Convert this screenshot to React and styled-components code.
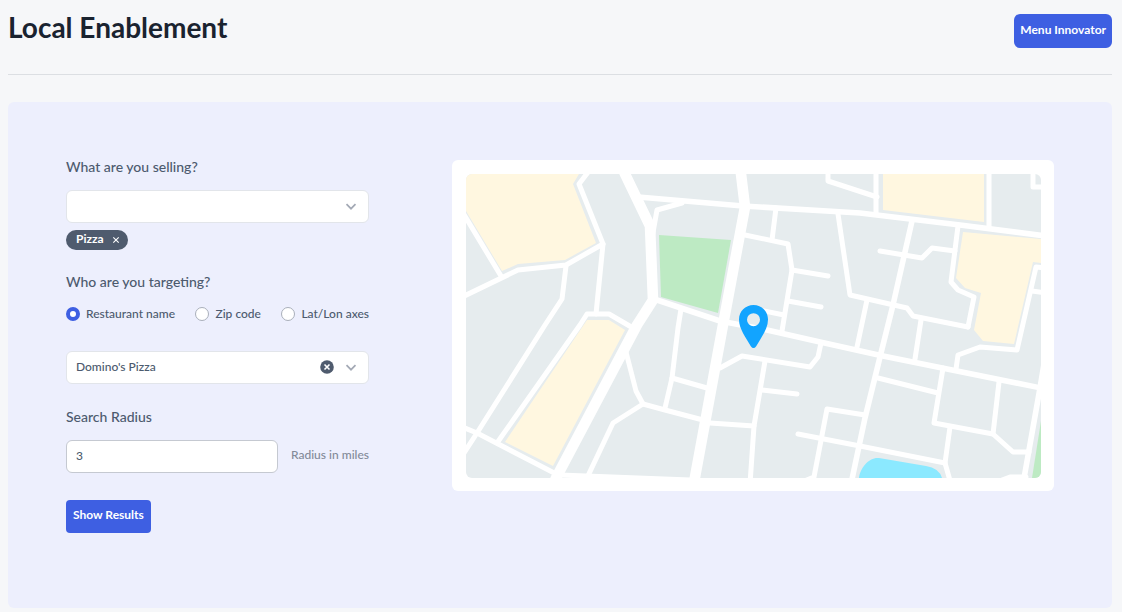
import React, { useState } from "react";
import styled, { createGlobalStyle } from "styled-components";

const GlobalStyle = createGlobalStyle`
  *, *::before, *::after { box-sizing: border-box; }
  body {
    margin: 0;
    background: #f6f7f9;
    color: #4c5a6e;
    font-family: Lato, "Liberation Sans", sans-serif;
    font-size: 12px;
  }
  button, input, select { font: inherit; color: inherit; }
`;

const Page = styled.div`
  padding: 14px 10px 4px 8px;
`;

const Header = styled.header`
  display: flex;
  justify-content: space-between;
  align-items: flex-start;
  padding-bottom: 26px;
  margin-bottom: 27px;
  border-bottom: 1px solid #dcdfe3;
`;

const Title = styled.h1`
  margin: 0;
  font-size: 28px;
  line-height: 26px;
  font-weight: 700;
  color: #1a2330;
`;

const Button = styled.button`
  height: ${(p) => (p.$tall ? 34 : 33)}px;
  padding: ${(p) => (p.$tall ? "0 6px 4px" : "0 7px 4px")};
  border: 0;
  border-radius: ${(p) => (p.$tall ? 6 : 4)}px;
  background: #3e5fe2;
  color: #fff;
  font-size: 12px;
  font-weight: 700;
  white-space: nowrap;
  cursor: pointer;
`;

const Panel = styled.main`
  display: grid;
  grid-template-columns: 303px minmax(0, 1fr);
  gap: 83px;
  align-items: start;
  padding: 58px 58px 75px;
  border-radius: 6px;
  background: #edeffd;
`;

const Form = styled.form`
  display: flex;
  flex-direction: column;
  align-items: stretch;
`;

const Field = styled.div`
  display: flex;
  flex-direction: column;
  gap: 16px;
  margin-bottom: ${(p) => p.$after}px;
`;

const RadioField = styled.fieldset`
  margin: 0 0 28px;
  padding: 0;
  border: 0;
  min-width: 0;
`;

const Label = styled.label`
  font-size: 14px;
  line-height: 14px;
  font-weight: 500;
`;

const Legend = styled.legend`
  padding: 0;
  margin-bottom: 16px;
  font-size: 14px;
  line-height: 14px;
  font-weight: 500;
`;

const SelectBox = styled.div`
  position: relative;
  display: flex;
`;

const Select = styled.select`
  appearance: none;
  width: 100%;
  height: 33px;
  padding: 0 60px 3px 9px;
  border: 1px solid #e2e5ea;
  border-radius: 6px;
  background: #fff;
  font-size: 12px;
  font-weight: 500;
`;

const Chevron = styled.svg`
  position: absolute;
  right: 12px;
  top: 13px;
  pointer-events: none;
`;

const ClearButton = styled.button`
  position: absolute;
  right: 35px;
  top: 9px;
  display: flex;
  padding: 0;
  border: 0;
  background: none;
  cursor: pointer;
`;

const Tags = styled.div`
  display: flex;
  height: 20px;
  margin: 7px 0 25px;
`;

const Tag = styled.span`
  display: flex;
  align-items: center;
  gap: 8px;
  padding: 0 8px 0 10px;
  border-radius: 10px;
  background: #4f5b6e;
  color: #fff;
  font-size: 12px;
  font-weight: 700;
`;

const TagText = styled.span`
  padding-bottom: 4px;
`;

const TagRemove = styled.button`
  display: flex;
  padding: 0;
  border: 0;
  background: none;
  cursor: pointer;
`;

const RadioRow = styled.div`
  display: flex;
  justify-content: space-between;
  height: 18px;
`;

const RadioLabel = styled.label`
  display: flex;
  align-items: center;
  gap: 6px;
  font-size: 12px;
  font-weight: 500;
  white-space: nowrap;
`;

const RadioText = styled.span`
  padding-bottom: 2px;
`;

const Radio = styled.input`
  appearance: none;
  width: 14px;
  height: 14px;
  margin: 0;
  border: 1px solid #a9afba;
  border-radius: 50%;
  background: #fff;
  &:checked { border: 4px solid #3e5fe2; }
`;

const RadiusRow = styled.div`
  display: flex;
  align-items: center;
  justify-content: space-between;
`;

const TextInput = styled.input`
  width: 212px;
  height: 33px;
  padding: 0 9px 2px;
  border: 1px solid #c5c9d1;
  border-radius: 6px;
  background: #fff;
  font-size: 12px;
  font-weight: 500;
`;

const Hint = styled.span`
  padding-bottom: 4px;
  color: #828a98;
  font-size: 12px;
  font-weight: 500;
`;

const Actions = styled.div`
  display: flex;
`;

const MapCard = styled.section`
  padding: 14px 13px 13px 14px;
  border-radius: 6px;
  background: #fff;
`;

const MapDrawing = styled.svg`
  display: block;
  width: 100%;
  height: auto;
  border-radius: 6px;
  background: #e6ecee;
`;

const avenues = [
  "M620 162L625 174L650 226L653 300L637 325L556 478L552 488",
  "M740 164L741 174L745 207L723 325L693 488",
];

const mainStreets = [
  "M638 197L650 198L743 206L860 213L960 225L1046 236",
  "M654 299L720 321L767 330L820 342L883 356L1046 389",
  "M1046 352L1040 388L1023 484",
  "M912 221L893 305L880 357L865 418L851 484",
];

const streets = [
  "M592 167L579 184L603 244L596 314",
  "M603 244L566 265L518 270L460 298",
  "M460 208L501 276",
  "M566 266L562 299L545 325L477 433L460 459",
  "M460 426L477 433L560 476",
  "M497 443L580 325L587 314L609 314L633 328",
  "M626 352L636 391L643 404L613 423L586 480",
  "M643 404L665 410L703 420",
  "M560 475L690 480",
  "M682 203L657 210L652 238",
  "M681 309L678 328L672 378L665 408",
  "M672 378L707 388",
  "M745 235L788 244L792 270L782 331",
  "M776 208L772 240",
  "M792 270L828 276",
  "M788 301L821 307",
  "M755 309L784 315",
  "M828 168L828 181L877 197",
  "M838 214L850 295L907 308L913 316L968 327",
  "M720 368L742 356L810 367L818 357L821 343",
  "M765 361L754 426L750 484",
  "M762 390L797 394",
  "M710 423L754 426",
  "M798 434L860 446L945 463",
  "M865 415L827 409L814 477L802 482",
  "M876 168V214",
  "M989 168V227",
  "M1033 168V187H1046",
  "M880 251L922 258L932 248L955 251",
  "M958 226L951 282L958 290L974 297L968 327",
  "M1046 268L1036 267L1017 350L980 347L958 355L956 369",
  "M1032 291L1046 293",
  "M867 300L857 347",
  "M921 320L915 359",
  "M878 378L938 393",
  "M943 368L934 423L993 434L1013 452H1029",
  "M999 382L993 434",
  "M950 427L945 463L951 484",
  "M1002 480L1010 477H1026",
];

const blocks = [
  { fill: "#fff7e0", d: "M466 174H579L573 184L596 243L565 260L518 264L502 271L466 211Z" },
  { fill: "#fff7e0", d: "M587 320H609L625 330L553 466L505 442Z" },
  { fill: "#fff7e0", d: "M883 174H984V222L883 210Z" },
  { fill: "#fff7e0", d: "M963 232L1041 239V263L1033 262L1014 344L983 341L974 330L981 293L965 288L956 278Z" },
  { fill: "#bdeac3", d: "M659 235L731 240L718 313L661 297Z" },
  { fill: "#bdeac3", d: "M1041 421V478H1032Z" },
  { fill: "#8be9ff", d: "M859 478C860 468 869 457 879 458L926 466Q939 468 942 478Z" },
];

function StreetMap() {
  return (
    <MapDrawing viewBox="466 174 575 304" role="img" aria-label="Map">
      {blocks.map((b) => (
        <path key={b.d} fill={b.fill} d={b.d} />
      ))}
      <g fill="none" stroke="#fff" strokeLinecap="round" strokeLinejoin="round">
        {streets.map((d) => (
          <path key={d} d={d} strokeWidth="5" />
        ))}
        {mainStreets.map((d) => (
          <path key={d} d={d} strokeWidth="5.6" />
        ))}
        {avenues.map((d) => (
          <path key={d} d={d} strokeWidth="10.6" />
        ))}
      </g>
      <path
        fill="#12a4ff"
        fillRule="evenodd"
        d="M753.500 305C745.300 305 739 311.400 739 319.500C739 329 746 337.500 750.800 346.200Q753.500 350 756.200 346.200C761 337.500 768 329 768 319.500C768 311.400 761.700 305 753.500 305ZM753.500 313.200A6.500 6.500 0 1 1 753.500 326.200A6.500 6.500 0 1 1 753.500 313.200Z"
      />
    </MapDrawing>
  );
}

function ChevronIcon() {
  return (
    <Chevron width="12" height="8" viewBox="0 0 12 8" aria-hidden="true">
      <path d="M1.500 1.200L6 5.700L10.500 1.200" fill="none" stroke="#a3a9b5" strokeWidth="1.700" />
    </Chevron>
  );
}

const targets = ["Restaurant name", "Zip code", "Lat/Lon axes"];

export default function App() {
  const [target, setTarget] = useState(targets[0]);
  const [tagged, setTagged] = useState(true);
  const [restaurant, setRestaurant] = useState("Domino's Pizza");
  const [radius, setRadius] = useState("3");

  return (
    <>
      <GlobalStyle />
      <Page>
        <Header>
          <Title>Local Enablement</Title>
          <Button type="button" $tall>Menu Innovator</Button>
        </Header>
        <Panel>
          <Form onSubmit={(e) => e.preventDefault()}>
            <Field $after={0}>
              <Label htmlFor="product">What are you selling?</Label>
              <SelectBox>
                <Select id="product" value="" onChange={() => setTagged(true)}>
                  <option value="" />
                  <option>Pizza</option>
                </Select>
                <ChevronIcon />
              </SelectBox>
            </Field>
            <Tags>
              {tagged && (
                <Tag>
                  <TagText>Pizza</TagText>
                  <TagRemove type="button" aria-label="Remove Pizza" onClick={() => setTagged(false)}>
                    <svg width="8" height="8" viewBox="0 0 8 8">
                      <path d="M1.300 1.300L6.700 6.700M6.700 1.300L1.300 6.700" stroke="#fff" strokeWidth="1.100" />
                    </svg>
                  </TagRemove>
                </Tag>
              )}
            </Tags>
            <RadioField>
              <Legend>Who are you targeting?</Legend>
              <RadioRow>
                {targets.map((t) => (
                  <RadioLabel key={t}>
                    <Radio type="radio" name="target" checked={target === t} onChange={() => setTarget(t)} />
                    <RadioText>{t}</RadioText>
                  </RadioLabel>
                ))}
              </RadioRow>
            </RadioField>
            <Field $after={26}>
              <SelectBox>
                <Select aria-label="Restaurant" value={restaurant} onChange={(e) => setRestaurant(e.target.value)}>
                  <option value="" />
                  <option>Domino's Pizza</option>
                </Select>
                <ClearButton type="button" aria-label="Clear restaurant" onClick={() => setRestaurant("")}>
                  <svg width="14" height="14" viewBox="0 0 14 14">
                    <circle cx="7" cy="7" r="6.800" fill="#4f5b6e" />
                    <path d="M4.500 4.500L9.500 9.500M9.500 4.500L4.500 9.500" stroke="#fff" strokeWidth="1.600" />
                  </svg>
                </ClearButton>
                <ChevronIcon />
              </SelectBox>
            </Field>
            <Field $after={27}>
              <Label htmlFor="radius">Search Radius</Label>
              <RadiusRow>
                <TextInput id="radius" value={radius} onChange={(e) => setRadius(e.target.value)} />
                <Hint>Radius in miles</Hint>
              </RadiusRow>
            </Field>
            <Actions>
              <Button type="submit">Show Results</Button>
            </Actions>
          </Form>
          <MapCard>
            <StreetMap />
          </MapCard>
        </Panel>
      </Page>
    </>
  );
}
